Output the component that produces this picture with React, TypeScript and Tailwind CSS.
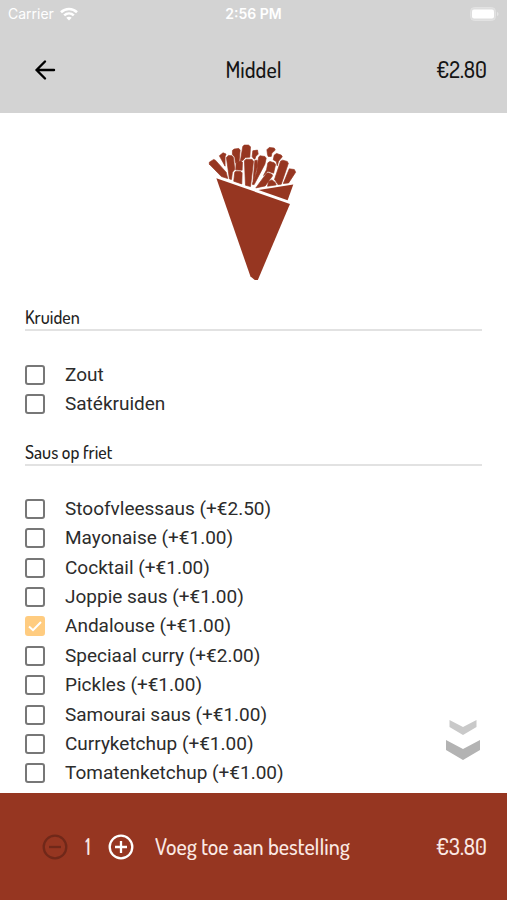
import { useState } from "react";

interface Option {
    name: string;
    extra?: number;
}

interface OptionGroup {
    title: string;
    options: Option[];
}

const BASE_PRICE = 2.8;

const spices: OptionGroup = {
    title: "Kruiden",
    options: [{ name: "Zout" }, { name: "Satékruiden" }],
};

const sauces: OptionGroup = {
    title: "Saus op friet",
    options: [
        { name: "Stoofvleessaus", extra: 2.5 },
        { name: "Mayonaise", extra: 1 },
        { name: "Cocktail", extra: 1 },
        { name: "Joppie saus", extra: 1 },
        { name: "Andalouse", extra: 1 },
        { name: "Speciaal curry", extra: 2 },
        { name: "Pickles", extra: 1 },
        { name: "Samourai saus", extra: 1 },
        { name: "Curryketchup", extra: 1 },
        { name: "Tomatenketchup", extra: 1 },
    ],
};

const formatPrice = (value: number) => `€${value.toFixed(2)}`;

function StatusBar() {
    return (
        <div className="grid h-7 grid-cols-3 items-center px-2 font-[Inter,sans-serif] text-sm text-white">
            <div className="flex items-center gap-1.5">
                <span>Carrier</span>
                <svg viewBox="0 0 18 14" className="h-3.5 w-[18px]" fill="none" stroke="currentColor" strokeWidth="2.6" aria-hidden="true">
                    <path d="M1 5.2C5.5 .9 12.5 .9 17 5.2" />
                    <path d="M4.2 8.4C7 5.8 11 5.8 13.8 8.4" />
                    <path d="M9 13.6 6.3 10.8C7.8 9.4 10.2 9.4 11.7 10.8Z" fill="currentColor" stroke="none" />
                </svg>
            </div>
            <span className="text-center font-semibold">2:56 PM</span>
            <svg viewBox="0 0 29 14" className="h-3.5 w-[29px] justify-self-end" aria-hidden="true">
                <rect x="0.5" y="0.5" width="25" height="13" rx="4" fill="#dedede" stroke="#e2e2e2" />
                <rect x="2" y="2.5" width="22" height="9" rx="2" fill="#fff" />
                <path d="M27 5v4c2-.6 2-3.4 0-4z" fill="#e4e4e4" />
            </svg>
        </div>
    );
}

function FriesCone() {
    return (
        <svg viewBox="39 28 275 412" className="mx-auto h-[138px] w-[92px]" fill="#963621" role="img" aria-label="Friet">
            <g stroke="#963621" strokeWidth="2" strokeLinejoin="round">
                {/* back row */}
                <path d="M73 63 84 54 93 58 90 66 90 94Z" />
                <path d="M112 47 117 43 131 41 135 46 132 80 121 84 119 67 112 59Z" />
                <path d="M143 35 147 31 160 31 166 36 164 67 151 68 143 77 136 77Z" />
                <path d="M173 48 187 46 189 58 182 65 179 73 174 70 171 65Z" />
                <path d="M215 45 222 38 237 40 240 46 230 55 228 65 219 65 217 60Z" />
                <path d="M237 61 244 56 258 61 261 66 250 79 246 93 243 80 234 75Z" />
                {/* front row */}
                <path d="M43 82 56 74 61 76 93 112 98 131 79 125 43 88Z" />
                <path d="M94 68 100 62 111 63 115 68 119 104 112 112 109 134 103 132Z" />
                <path d="M123 84 137 78 142 82 141 106 122 105Z" />
                <path d="M119 112 123 109 137 110 141 114 140 147 116 139Z" />
                <path d="M148 78 153 73 171 74 175 80 166 155 151 151Z" />
                <path d="M179 77 186 76 187 93 181 117 178 130 173 147Z" />
                <path d="M190 68 194 63 209 65 213 70 209 88 177 149 172 149 185 110Z" />
                <path d="M218 84 224 80 237 84 241 89 235 115 218 109 205 122 214 105Z" />
                <path d="M214 115 219 114 230 118 232 123 210 153 182 159Z" />
                <path d="M220 140 230 135 239 142 243 150 217 154Z" />
                <path d="M256 79 262 76 276 80 279 86 258 148 248 149 238 133Z" />
                <path d="M282 102 297 104 301 112 280 144 264 146Z" />
            </g>
            {/* paper cone */}
            <path d="M190 165 294 149 277 196Z" />
            <path d="M64 130 284 207 188 434 179 434 166 424Z" />
        </svg>
    );
}

function GroupTitle({ children }: { children: string }) {
    return (
        <h2 className="border-b-2 border-[#e2e2e2] font-[Dosis,Roboto,sans-serif] text-lg font-medium leading-6 text-[#222]">
            {children}
        </h2>
    );
}

interface RowProps {
    option: Option;
    checked: boolean;
    onToggle: () => void;
}

function OptionRow({ option, checked, onToggle }: RowProps) {
    return (
        <li className="flex flex-1 items-center">
            <label className="flex items-center gap-5 text-[19px] leading-7 text-[#2c2c2c]">
                <span className="grid size-5 place-items-center">
                    <input
                        type="checkbox"
                        checked={checked}
                        onChange={onToggle}
                        className="col-start-1 row-start-1 size-5 appearance-none rounded-[3px] border-2 border-[#777] bg-white checked:border-[#ffcc80] checked:bg-[#ffcc80]"
                    />
                    {checked && (
                        <svg viewBox="0 0 20 20" className="pointer-events-none col-start-1 row-start-1 size-5" fill="none" stroke="#fff" strokeWidth="2" aria-hidden="true">
                            <path d="M4 10.5 8 14.2 16 6" />
                        </svg>
                    )}
                </span>
                <span>
                    {option.name}
                    {option.extra ? ` (+${formatPrice(option.extra)})` : ""}
                </span>
            </label>
        </li>
    );
}

export default function App() {
    const [selected, setSelected] = useState<string[]>(["Andalouse"]);
    const [quantity, setQuantity] = useState(1);

    const toggle = (name: string) =>
        setSelected((prev) => (prev.includes(name) ? prev.filter((n) => n !== name) : [...prev, name]));

    const extras = sauces.options
        .filter((o) => selected.includes(o.name))
        .reduce((sum, o) => sum + (o.extra ?? 0), 0);

    return (
        <div className="flex min-h-screen flex-col bg-white font-[Roboto,sans-serif]">
            <header className="bg-[#d3d3d3] pb-0.5">
                <StatusBar />
                <div className="grid h-[83px] grid-cols-3 items-center px-5 font-[Dosis,Roboto,sans-serif] text-[22px] font-medium text-[#151515]">
                    <button type="button" aria-label="Terug" className="ml-3 size-6 justify-self-start text-black">
                        <svg viewBox="0 0 24 24" className="size-6" fill="none" stroke="currentColor" strokeWidth="2.4" strokeLinecap="round" strokeLinejoin="round">
                            <path d="M22 12H4.5M13 3.5 4.5 12 13 20.5" />
                        </svg>
                    </button>
                    <h1 className="text-center">Middel</h1>
                    <span className="text-right">{formatPrice(BASE_PRICE)}</span>
                </div>
            </header>

            <main className="relative flex flex-1 flex-col px-[25px] pb-[5px] pt-[31px]">
                <FriesCone />

                <section className="mt-[23px]">
                    <GroupTitle>{spices.title}</GroupTitle>
                    <ul className="mt-[30px] flex flex-col gap-px">
                        {spices.options.map((o) => (
                            <OptionRow key={o.name} option={o} checked={selected.includes(o.name)} onToggle={() => toggle(o.name)} />
                        ))}
                    </ul>
                </section>

                <section className="mt-[22px] flex flex-1 flex-col">
                    <GroupTitle>{sauces.title}</GroupTitle>
                    <ul className="mt-7 flex flex-1 flex-col">
                        {sauces.options.map((o) => (
                            <OptionRow key={o.name} option={o} checked={selected.includes(o.name)} onToggle={() => toggle(o.name)} />
                        ))}
                    </ul>
                </section>

                {/* scroll hint */}
                <svg viewBox="0 0 36 42" className="absolute bottom-8 right-[26px] h-[42px] w-9" aria-hidden="true">
                    <path d="M4.5 1 18 8 31.5 1v7L18 16 4.5 8Z" fill="#c9c9c9" />
                    <path d="M1 21 18 30 35 21v10L18 41 1 31Z" fill="#b3b3b3" />
                </svg>
            </main>

            <footer className="flex h-[107px] items-center bg-[#963621] pl-[41px] pr-5 font-[Dosis,Roboto,sans-serif] text-[22px] font-medium text-[#fbe9e4]">
                <button
                    type="button"
                    aria-label="Minder"
                    disabled={quantity === 1}
                    onClick={() => setQuantity(quantity - 1)}
                    className="text-white disabled:text-[#702819]"
                >
                    <svg viewBox="0 0 28 28" className="size-7" fill="none" stroke="currentColor" strokeWidth="2.3">
                        <circle cx="14" cy="14" r="11.3" />
                        <path d="M8 14h12" />
                    </svg>
                </button>
                <span className="w-[38px] text-center">{quantity}</span>
                <button type="button" aria-label="Meer" onClick={() => setQuantity(quantity + 1)} className="text-white">
                    <svg viewBox="0 0 28 28" className="size-7" fill="none" stroke="currentColor" strokeWidth="2.3">
                        <circle cx="14" cy="14" r="11.3" />
                        <path d="M8 14h12M14 8v12" />
                    </svg>
                </button>
                <button type="button" className="ml-5 flex flex-1 items-center justify-between">
                    <span>Voeg toe aan bestelling</span>
                    <span>{formatPrice((BASE_PRICE + extras) * quantity)}</span>
                </button>
            </footer>
        </div>
    );
}
